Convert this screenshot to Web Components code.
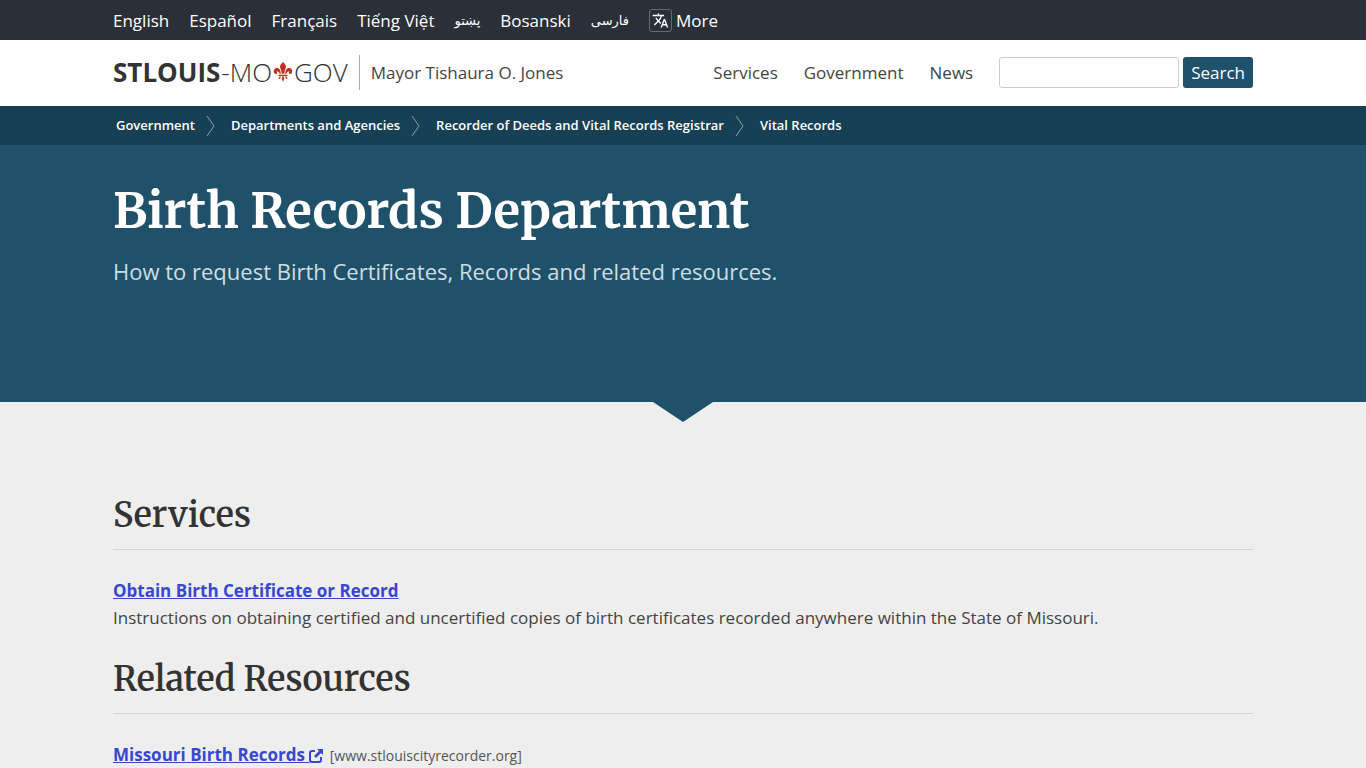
<!DOCTYPE html>
<html lang="en">
<head>
<meta charset="utf-8">
<meta name="viewport" content="width=device-width, initial-scale=1">
<title>Birth Records Department</title>
<style>
  :root{
    --color-dark:#2a2f38;
    --color-primary:#1f526a;
    --color-primary-dark:#184054;
    --color-font:#333;
    --color-link:#3748d0;
    --font-heading:Merriweather,"DejaVu Serif Condensed","DejaVu Serif",serif;
    --page-width:1140px;
  }
  body{
    margin:0;
    background:#eee;
    color:var(--color-font);
    font:17px/27px "Open Sans","Noto Sans",sans-serif;
  }
</style>
</head>
<body>
<stl-languages></stl-languages>
<stl-header mayor="Mayor Tishaura O. Jones">
  <stl-nav-link href="#services">Services</stl-nav-link>
  <stl-nav-link href="#government">Government</stl-nav-link>
  <stl-nav-link href="#news">News</stl-nav-link>
</stl-header>
<stl-breadcrumbs>
  <stl-crumb href="#government">Government</stl-crumb>
  <stl-crumb href="#departments">Departments and Agencies</stl-crumb>
  <stl-crumb href="#recorder">Recorder of Deeds and Vital Records Registrar</stl-crumb>
  <stl-crumb href="#vital" last>Vital Records</stl-crumb>
</stl-breadcrumbs>
<stl-hero>
  <span slot="title">Birth Records Department</span>
  How to request Birth Certificates, Records and related resources.
</stl-hero>
<stl-content>
  <stl-section>
    <span slot="title">Services</span>
    <stl-entry href="#obtain">
      <span slot="title">Obtain Birth Certificate or Record</span>
      Instructions on obtaining certified and uncertified copies of birth certificates recorded anywhere within the State of Missouri.
    </stl-entry>
  </stl-section>
  <stl-section>
    <span slot="title">Related Resources</span>
    <stl-entry href="#missouri" site="www.stlouiscityrecorder.org">
      <span slot="title">Missouri Birth Records</span>
    </stl-entry>
  </stl-section>
</stl-content>

<script>
const wrapStyle=`
  .wrap{
    box-sizing:border-box;
    width:calc(100% - 40px);
    max-width:var(--page-width);
    margin:0 auto;
  }
`;

class StlLanguages extends HTMLElement{
  constructor(){
    super();
    this.attachShadow({mode:'open'});
    const langs=[
      ["en","English"],["es","Español"],["fr","Français"],["vi","Tiếng Việt"],
      ["ps","پښتو"],["bs","Bosanski"],["fa","فارسی"]
    ];
    this.shadowRoot.innerHTML=`
    <style>
      ${wrapStyle}
      :host{
        display:block;
        background:var(--color-dark);
        color:#fff;
        font-weight:500;
      }
      .wrap{
        display:flex;
        flex-wrap:wrap;
        align-items:center;
        gap:0 20px;
        min-height:40px;
      }
      a{
        color:inherit;
        text-decoration:none;
      }
      :lang(ps),:lang(fa){
        font-family:"DejaVu Sans",sans-serif;
        font-size:13px;
        font-weight:400;
      }
      .more{
        display:flex;
        align-items:center;
        gap:4px;
      }
      .icon{
        box-sizing:border-box;
        display:flex;
        align-items:center;
        justify-content:center;
        width:23px;
        height:23px;
        border:1px solid #666b73;
        border-radius:3px;
      }
    </style>
    <nav class="wrap" aria-label="Languages">
      ${langs.map(([code,name])=>`<a href="#${code}" lang="${code}">${name}</a>`).join("")}
      <a class="more" href="#more">
        <span class="icon">
          <svg width="17" height="17" viewBox="0 0 24 24" fill="#fff" aria-hidden="true">
            <path d="M12.87 15.07l-2.54-2.51.03-.03A17.52 17.52 0 0 0 14.07 6H17V4h-7V2H8v2H1v2h11.17C11.5 7.92 10.44 9.75 9 11.35 8.07 10.32 7.3 9.19 6.69 8h-2c.73 1.63 1.73 3.17 2.98 4.56l-5.09 5.02L4 19l5-5 3.11 3.11.76-2.04zM18.5 10h-2L12 22h2l1.12-3h4.75L21 22h2l-4.5-12zm-2.62 7l1.62-4.33L19.12 17h-3.24z"/>
          </svg>
        </span>More
      </a>
    </nav>`;
  }
}
customElements.define('stl-languages',StlLanguages);

class StlNavLink extends HTMLElement{
  constructor(){
    super();
    this.attachShadow({mode:'open'});
    this.shadowRoot.innerHTML=`
    <style>
      :host{
        display:block;
      }
      a{
        color:inherit;
        text-decoration:none;
      }
    </style>
    <a href="${this.getAttribute('href')||"#"}"><slot></slot></a>`;
  }
}
customElements.define('stl-nav-link',StlNavLink);

class StlHeader extends HTMLElement{
  constructor(){
    super();
    this.attachShadow({mode:'open'});
    this.shadowRoot.innerHTML=`
    <style>
      ${wrapStyle}
      :host{
        display:block;
        background:#fff;
      }
      .wrap{
        display:flex;
        flex-wrap:wrap;
        align-items:center;
        min-height:66px;
        padding-bottom:2px;
      }
      .logo{
        display:flex;
        align-items:center;
        gap:1px;
        color:inherit;
        font-size:26px;
        font-weight:300;
        line-height:35px;
        text-decoration:none;
      }
      .logo b{
        font-weight:700;
      }
      .mayor{
        margin-left:11px;
        padding-left:11px;
        border-left:1px solid #aaa;
        color:#444;
        line-height:35px;
      }
      nav{
        display:flex;
        gap:26px;
        margin-left:auto;
        color:#444;
      }
      form{
        display:flex;
        gap:4px;
        margin-left:26px;
      }
      input{
        box-sizing:border-box;
        width:180px;
        height:31px;
        padding:0 8px;
        border:1px solid #ccc;
        border-radius:3px;
        background:#fff;
        font:inherit;
      }
      button{
        height:31px;
        padding:0 8px;
        border:0;
        border-radius:3px;
        background:var(--color-primary);
        color:#fff;
        font:inherit;
        font-weight:500;
      }
    </style>
    <header class="wrap">
      <a class="logo" href="#home"><b>STLOUIS</b><span>-MO</span>
        <svg width="20" height="20" viewBox="0 0 22 22" fill="#c0311f" aria-hidden="true">
          <path d="M11 0c3 2.600 4 4.800 2.800 7.300-.8 1.700-1.300 3-1.300 5.700h-3c0-2.700-.5-4-1.300-5.700C7 4.800 8 2.600 11 0z"/>
          <path d="M8.600 13C8.700 9.200 6.700 6.500 4 6.700 1.400 6.900.1 9.600 1.300 12c.5 1.100 1.600 1.500 2.500 1 .9-.5.9-1.700.1-2.400 1.700-.8 3.100.4 3.200 2.400z"/>
          <path d="M13.400 13c-.1-3.800 1.900-6.500 4.600-6.300 2.600.2 3.900 2.900 2.700 5.300-.5 1.100-1.600 1.500-2.500 1-.9-.5-.9-1.700-.1-2.400-1.700-.8-3.100.4-3.200 2.400z"/>
          <path d="M6 14h10v1.500H6zM9.800 16h2.400c0 2.200.2 3.600-1.200 5.600-1.400-2-1.200-3.400-1.200-5.600zM8.600 16c0 2-1.300 3.200-3.100 2.500.9-.4 1.400-1.200 1.600-2.500zM13.400 16c0 2 1.300 3.200 3.100 2.500-.9-.4-1.400-1.200-1.600-2.500z"/>
        </svg><span>GOV</span></a>
      <span class="mayor">${this.getAttribute('mayor')||""}</span>
      <nav aria-label="Main"><slot></slot></nav>
      <form role="search">
        <input type="search" aria-label="Search">
        <button type="submit">Search</button>
      </form>
    </header>`;
    this.shadowRoot.querySelector("form").addEventListener("submit",e=>e.preventDefault());
  }
}
customElements.define('stl-header',StlHeader);

class StlBreadcrumbs extends HTMLElement{
  constructor(){
    super();
    this.attachShadow({mode:'open'});
    this.shadowRoot.innerHTML=`
    <style>
      ${wrapStyle}
      :host{
        display:block;
        background:var(--color-primary-dark);
        color:#fff;
        font-size:13px;
        font-weight:600;
      }
      .wrap{
        display:flex;
        flex-wrap:wrap;
        align-items:center;
        gap:0 16px;
        min-height:39px;
        padding-left:3px;
      }
    </style>
    <nav class="wrap" aria-label="Breadcrumb"><slot></slot></nav>`;
  }
}
customElements.define('stl-breadcrumbs',StlBreadcrumbs);

class StlCrumb extends HTMLElement{
  constructor(){
    super();
    this.attachShadow({mode:'open'});
    this.shadowRoot.innerHTML=`
    <style>
      :host{
        display:flex;
        align-items:center;
        gap:11px;
      }
      :host([last]) svg{
        display:none;
      }
      a{
        color:inherit;
        text-decoration:none;
      }
    </style>
    <a href="${this.getAttribute('href')||"#"}"><slot></slot></a>
    <svg width="9" height="22" viewBox="0 0 9 22" fill="none" stroke="#8ca0aa" aria-hidden="true">
      <path d="M1 1l7 10-7 10"/>
    </svg>`;
  }
}
customElements.define('stl-crumb',StlCrumb);

class StlHero extends HTMLElement{
  constructor(){
    super();
    this.attachShadow({mode:'open'});
    this.shadowRoot.innerHTML=`
    <style>
      ${wrapStyle}
      :host{
        display:block;
        position:relative;
        box-sizing:border-box;
        min-height:257px;
        padding:30px 0 40px;
        background:var(--color-primary);
        color:#fff;
      }
      h1{
        margin:0;
        font:700 49px/72px var(--font-heading);
      }
      p{
        margin:9px 0 0;
        color:#cfdde3;
        font-size:22px;
        line-height:30px;
      }
      /* pointer hanging over the content below */
      :host::after{
        content:"";
        position:absolute;
        top:100%;
        left:calc(50% - 30px);
        width:60px;
        height:20px;
        background:var(--color-primary);
        clip-path:polygon(0 0,100% 0,50% 100%);
      }
    </style>
    <div class="wrap">
      <h1><slot name="title"></slot></h1>
      <p><slot></slot></p>
    </div>`;
  }
}
customElements.define('stl-hero',StlHero);

class StlContent extends HTMLElement{
  constructor(){
    super();
    this.attachShadow({mode:'open'});
    this.shadowRoot.innerHTML=`
    <style>
      ${wrapStyle}
      :host{
        display:block;
        padding-top:65px;
      }
    </style>
    <main class="wrap"><slot></slot></main>`;
  }
}
customElements.define('stl-content',StlContent);

class StlSection extends HTMLElement{
  constructor(){
    super();
    this.attachShadow({mode:'open'});
    this.shadowRoot.innerHTML=`
    <style>
      :host{
        display:block;
        padding-top:20px;
      }
      h2{
        margin:0 0 27px;
        padding-bottom:6px;
        border-bottom:1px solid #d3d3d3;
        font:600 34px/56px var(--font-heading);
      }
    </style>
    <section>
      <h2><slot name="title"></slot></h2>
      <slot></slot>
    </section>`;
  }
}
customElements.define('stl-section',StlSection);

class StlEntry extends HTMLElement{
  constructor(){
    super();
    this.attachShadow({mode:'open'});
    const site=this.getAttribute('site');
    this.shadowRoot.innerHTML=`
    <style>
      :host{
        display:block;
        color:#444;
      }
      a{
        color:var(--color-link);
        font-weight:700;
      }
      svg{
        vertical-align:-2px;
      }
      small{
        margin-left:2px;
        font-size:14px;
        line-height:20px;
        color:#555;
      }
    </style>
    <div>
      <a href="${this.getAttribute('href')||"#"}"><slot name="title"></slot>${site?` <svg width="14" height="14" viewBox="0 0 14 14" aria-hidden="true">
        <path d="M6 2H3Q1 2 1 4v7q0 2 2 2h7q2 0 2-2V8" fill="none" stroke="currentColor" stroke-width="2"/>
        <path d="M8 0h6v6l-2-2-5 5-2-2 5-5z" fill="currentColor"/>
      </svg>`:""}</a>
      ${site?`<small>[${site}]</small>`:""}
    </div>
    <div><slot></slot></div>`;
  }
}
customElements.define('stl-entry',StlEntry);
</script>
</body>
</html>
